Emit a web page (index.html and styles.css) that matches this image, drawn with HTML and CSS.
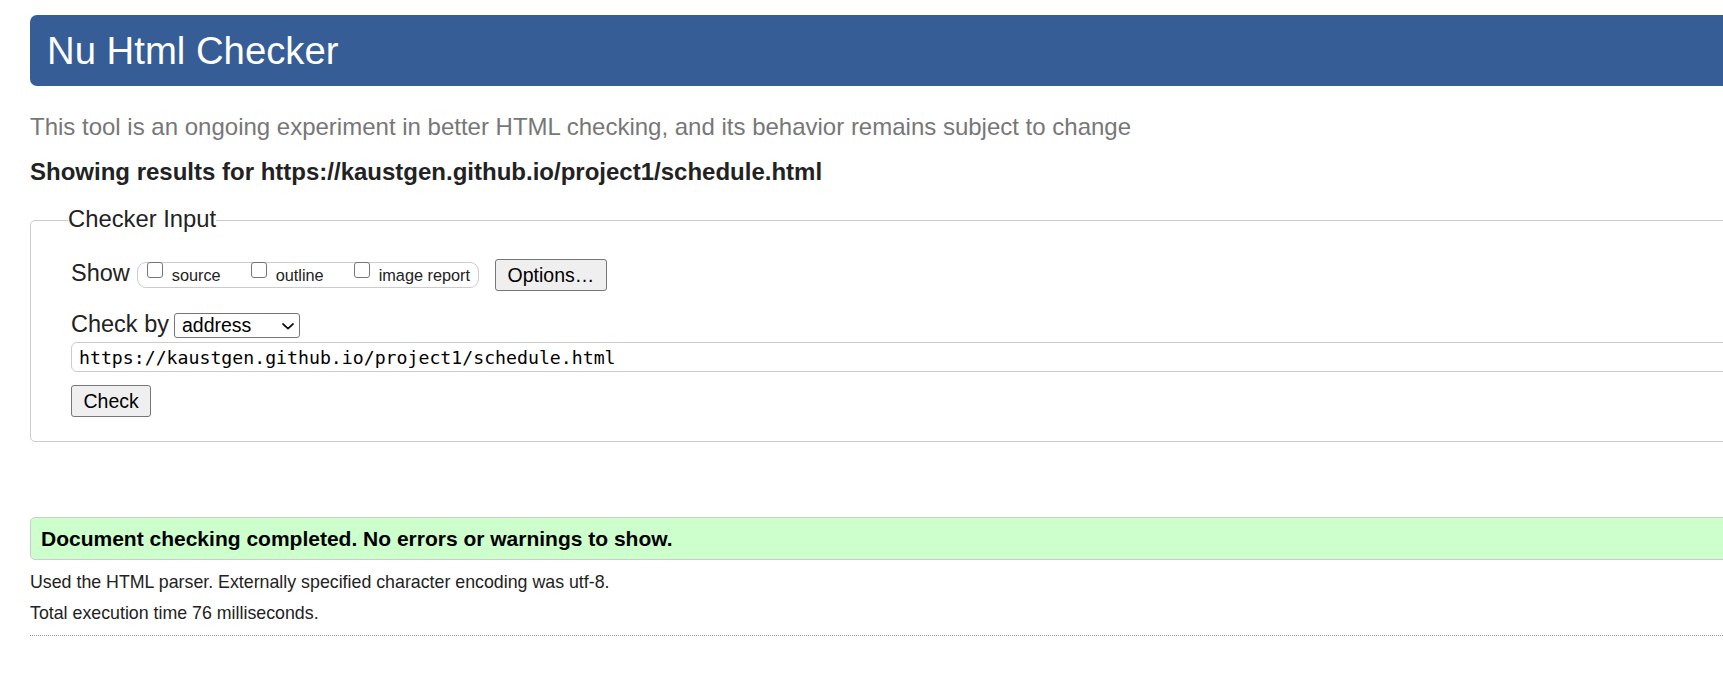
FILE: index.html
```html
<!DOCTYPE html>
<html lang="en">
<head>
<meta charset="utf-8">
<title>Nu Html Checker</title>
<link rel="stylesheet" href="styles.css">
</head>
<body>
<div class="page">
  <h1 class="title">Nu Html Checker</h1>
  <p class="tagline">This tool is an ongoing experiment in better HTML checking, and its behavior remains subject to change</p>
  <p class="showing">Showing results for https://kaustgen.github.io/project1/schedule.html</p>
  <form class="checker">
    <fieldset class="checker-input">
      <legend class="legend">Checker Input</legend>
      <div class="show-row">
        <span class="label">Show</span>
        <span class="pill">
          <label class="opt"><input type="checkbox" class="cb"><span>source</span></label>
          <label class="opt"><input type="checkbox" class="cb"><span>outline</span></label>
          <label class="opt"><input type="checkbox" class="cb"><span>image report</span></label>
        </span>
        <button type="button" class="btn options">Options…</button>
      </div>
      <div class="by-row">
        <label class="label" for="docselect">Check by</label>
        <span class="select-wrap">
          <select class="select" id="docselect"><option>address</option></select>
          <svg class="chev" viewBox="0 0 12 7" aria-hidden="true"><path d="M1 1 L6 5.6 L11 1" fill="none" stroke="#111" stroke-width="1.7" stroke-linecap="round" stroke-linejoin="round"/></svg>
        </span>
      </div>
      <input class="url" type="text" value="https://kaustgen.github.io/project1/schedule.html">
      <button type="button" class="btn check">Check</button>
    </fieldset>
  </form>
  <div class="success">Document checking completed. No errors or warnings to show.</div>
  <p class="details">Used the HTML parser. Externally specified character encoding was utf-8.</p>
  <p class="details">Total execution time 76 milliseconds.</p>
  <hr class="rule">
</div>
</body>
</html>
```

FILE: styles.css
```css
html, body {
  margin: 0;
  padding: 0;
  background: #fff;
  overflow: hidden;
}

body {
  font-family: "Liberation Sans", Arial, sans-serif;
  color: #222;
}

.page {
  box-sizing: border-box;
  width: calc(100vw + 40px);
  padding: 15px 0 0 30px;
}

.title {
  margin: 0;
  height: 71px;
  line-height: 71px;
  padding: 0 17px;
  background: #365d95;
  color: #fff;
  font-size: 38.3px;
  font-weight: normal;
  border-radius: 7px 0 0 7px;
}

.tagline {
  margin: 27px 0 0;
  font-size: 24px;
  line-height: 28px;
  color: #777;
}

.showing {
  margin: 17px 0 0;
  font-size: 24px;
  line-height: 28px;
  font-weight: bold;
  color: #222;
}

.checker {
  margin: 19px 0 0;
}

.checker-input {
  margin: 0;
  min-width: 0;
  border: 1px solid #ccc;
  border-radius: 5px;
  padding: 23px 0 24px 40px;
}

.legend {
  padding: 0 0 3px;
  margin-left: -3px;
  font-size: 23.8px;
  line-height: 28px;
  color: #222;
}

.show-row {
  display: flex;
  align-items: flex-start;
  height: 32px;
}

.label {
  font-size: 23.5px;
  line-height: 28px;
  color: #222;
}

.pill {
  display: flex;
  align-items: flex-start;
  gap: 30px;
  box-sizing: border-box;
  height: 26px;
  margin: 3px 0 0 7px;
  padding: 0 8px 0 9px;
  border: 1px solid #ccc;
  border-radius: 9px;
}

.opt {
  display: flex;
  align-items: flex-start;
  font-size: 16.3px;
  line-height: 24px;
  color: #222;
}

.cb {
  appearance: none;
  -webkit-appearance: none;
  box-sizing: border-box;
  width: 16px;
  height: 16px;
  margin: -1px 9px 0 0;
  border: 1px solid #767676;
  border-radius: 3px;
  background: #fff;
}

.btn {
  box-sizing: border-box;
  height: 32px;
  padding: 0 11.5px;
  font-family: inherit;
  font-size: 19.5px;
  color: #000;
  background: #efefef;
  border: 1px solid #767676;
  border-radius: 3px;
}

.options {
  margin-left: 16px;
}

.by-row {
  display: flex;
  align-items: baseline;
  margin-top: 19px;
}

.select-wrap {
  position: relative;
  display: inline-block;
  margin-left: 5px;
}

.select {
  appearance: none;
  -webkit-appearance: none;
  box-sizing: border-box;
  width: 126px;
  height: 25px;
  padding: 0 0 0 7px;
  font-family: inherit;
  font-size: 19.5px;
  color: #000;
  background: #fff;
  border: 1px solid #767676;
  border-radius: 3px;
}

.chev {
  position: absolute;
  right: 6px;
  top: 10px;
  width: 12px;
  height: 7px;
  pointer-events: none;
}

.url {
  display: block;
  box-sizing: border-box;
  width: 100%;
  height: 30px;
  margin: 4px 0 0;
  padding: 0 7px;
  font-family: "DejaVu Sans Mono", "Liberation Mono", monospace;
  font-size: 18.2px;
  color: #000;
  background: #fff;
  border: 1px solid #ccc;
  border-radius: 6px;
}

.check {
  display: block;
  margin-top: 13px;
}

.success {
  box-sizing: border-box;
  height: 43px;
  margin-top: 75px;
  padding: 9px 10px 8px;
  border: 1px solid #ccc;
  border-radius: 5px;
  background: #ccffcc;
  font-size: 21px;
  line-height: 24px;
  font-weight: bold;
  color: #000;
}

.details {
  margin: 11px 0 0;
  font-size: 17.8px;
  line-height: 22px;
  color: #222;
}

.details + .details {
  margin-top: 9px;
}

.rule {
  height: 0;
  margin: 11px 0 0;
  border: 0;
  border-top: 1px dotted #999;
}
```
